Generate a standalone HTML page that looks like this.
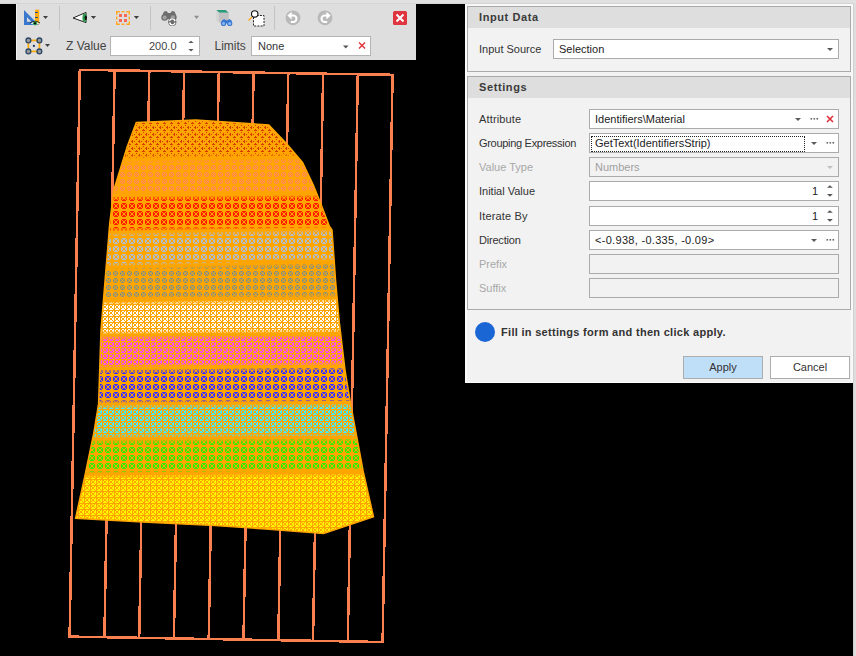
<!DOCTYPE html>
<html><head><meta charset="utf-8">
<style>
*{box-sizing:border-box;margin:0;padding:0}
html,body{width:856px;height:656px;overflow:hidden;background:#000}
body{position:relative;font-family:"Liberation Sans",sans-serif;font-size:11px;color:#333}
.a{position:absolute}
.lbl{left:479px;height:20px;line-height:20px;font-size:11px;color:#333;white-space:nowrap}
.lbl.dis{color:#a8a8a8}
.ed{height:20px;border:1px solid #ababab;font-size:11px;line-height:18px;padding-left:5px;white-space:nowrap;overflow:hidden}
.hdr{left:468px;width:382px;height:21px;background:#dedede;font-weight:bold;font-size:11px;letter-spacing:0.6px;color:#3a3a3a;padding-left:11px;line-height:21px}
.tbt{font-size:12px;color:#444;line-height:20px;height:20px;white-space:nowrap}
.btn{height:23px;border:1px solid #adadad;font-size:11px;color:#333;text-align:center;line-height:21px}
</style></head>
<body>
<svg class="a" style="left:0;top:0" width="856" height="656">
<defs><linearGradient id="sep" x1="0" y1="0" x2="0" y2="1"><stop offset="0" stop-color="#ffa500" stop-opacity="0"/><stop offset="0.5" stop-color="#ffa500" stop-opacity="1"/><stop offset="1" stop-color="#ffa500" stop-opacity="0"/></linearGradient><clipPath id="mc"><polygon points="136.3,122.5 195.7,120 268.8,124.9 286.6,143.7 302.5,162.5 313.4,185.2 321.3,205 329.2,225.8 332,230 335.6,281 339.3,322.4 345,370 350.1,401 356.6,436 363.1,471 373.5,516.8 323.6,533.5 265.6,529 215,525.5 142.5,521.9 75.6,518.3 85.2,474.4 93.6,434 98.6,403.9 101,330 105.3,277.8 109.7,224 113.7,190.5 127.1,146.9"/></clipPath><pattern id="p0" width="7" height="7" patternUnits="userSpaceOnUse" x="0" y="110"><rect width="7" height="7" fill="rgb(215,60,0)"/><g shape-rendering="crispEdges"><path d="M0 0L7 7M7 0L0 7" stroke="#ffa500" stroke-width="1.5"/><path d="M0 0H7M0 0V7M0 7H7M7 0V7" stroke="#ffa500" stroke-width="1"/></g></pattern><pattern id="p1" width="7" height="7" patternUnits="userSpaceOnUse" x="0" y="157"><rect width="7" height="7" fill="rgb(255,137,80)"/><g shape-rendering="crispEdges"><path d="M0 0L7 7M7 0L0 7" stroke="#ffa500" stroke-width="1"/><path d="M0 0H7M0 0V7M0 7H7M7 0V7" stroke="#ffa500" stroke-width="1.5"/></g></pattern><pattern id="p2" width="8" height="8" patternUnits="userSpaceOnUse" x="0" y="194"><rect width="8" height="8" fill="rgb(255,31,0)"/><g shape-rendering="crispEdges"><path d="M0 0L8 8M8 0L0 8" stroke="#ffa500" stroke-width="1"/><path d="M0 0H8M0 0V8M0 8H8M8 0V8" stroke="#ffa500" stroke-width="2"/></g></pattern><pattern id="p3" width="8" height="8" patternUnits="userSpaceOnUse" x="0" y="229"><rect width="8" height="8" fill="rgb(178,189,206)"/><g shape-rendering="crispEdges"><path d="M0 0L8 8M8 0L0 8" stroke="#ffa500" stroke-width="1"/><path d="M0 0H8M0 0V8M0 8H8M8 0V8" stroke="#ffa500" stroke-width="2"/></g></pattern><pattern id="p4" width="7" height="7" patternUnits="userSpaceOnUse" x="0" y="263"><rect width="7" height="7" fill="rgb(139,147,125)"/><g shape-rendering="crispEdges"><path d="M0 0L7 7M7 0L0 7" stroke="#ffa500" stroke-width="1"/><path d="M0 0H7M0 0V7M0 7H7M7 0V7" stroke="#ffa500" stroke-width="1.5"/></g></pattern><pattern id="p5" width="6" height="6" patternUnits="userSpaceOnUse" x="0" y="298"><rect width="6" height="6" fill="rgb(255,255,254)"/><g shape-rendering="crispEdges"><path d="M0 0L6 6M6 0L0 6" stroke="#ffa500" stroke-width="1"/><path d="M0 0H6M0 0V6M0 6H6M6 0V6" stroke="#ffa500" stroke-width="1"/></g></pattern><pattern id="p6" width="6" height="6" patternUnits="userSpaceOnUse" x="0" y="335"><rect width="6" height="6" fill="rgb(255,71,255)"/><g shape-rendering="crispEdges"><path d="M0 0L6 6M6 0L0 6" stroke="#ffa500" stroke-width="1"/><path d="M0 0H6M0 0V6M0 6H6M6 0V6" stroke="#ffa500" stroke-width="1"/></g></pattern><pattern id="p7" width="8" height="8" patternUnits="userSpaceOnUse" x="0" y="367"><rect width="8" height="8" fill="rgb(63,47,255)"/><g shape-rendering="crispEdges"><path d="M0 0L8 8M8 0L0 8" stroke="#ffa500" stroke-width="1"/><path d="M0 0H8M0 0V8M0 8H8M8 0V8" stroke="#ffa500" stroke-width="2"/></g></pattern><pattern id="p8" width="6" height="6" patternUnits="userSpaceOnUse" x="0" y="403"><rect width="6" height="6" fill="rgb(69,235,255)"/><g shape-rendering="crispEdges"><path d="M0 0L6 6M6 0L0 6" stroke="#ffa500" stroke-width="1"/><path d="M0 0H6M0 0V6M0 6H6M6 0V6" stroke="#ffa500" stroke-width="1"/></g></pattern><pattern id="p9" width="8" height="8" patternUnits="userSpaceOnUse" x="0" y="438"><rect width="8" height="8" fill="rgb(52,237,0)"/><g shape-rendering="crispEdges"><path d="M0 0L8 8M8 0L0 8" stroke="#ffa500" stroke-width="1"/><path d="M0 0H8M0 0V8M0 8H8M8 0V8" stroke="#ffa500" stroke-width="2"/></g></pattern><pattern id="p10" width="6" height="6" patternUnits="userSpaceOnUse" x="0" y="473"><rect width="6" height="6" fill="rgb(255,246,0)"/><g shape-rendering="crispEdges"><path d="M0 0L6 6M6 0L0 6" stroke="#ffa500" stroke-width="1"/><path d="M0 0H6M0 0V6M0 6H6M6 0V6" stroke="#ffa500" stroke-width="1"/></g></pattern></defs>
<g shape-rendering="crispEdges"><polygon points="79.8,69.8 392.6,74.8 382.6,642.0 69.6,636.6" fill="none" stroke="rgb(250,128,80)" stroke-width="2.5"/><line x1="114.6" y1="70.4" x2="104.4" y2="637.2" stroke="rgb(250,128,80)" stroke-width="2.5"/><line x1="149.3" y1="70.9" x2="139.2" y2="637.8" stroke="rgb(250,128,80)" stroke-width="2.5"/><line x1="184.1" y1="71.5" x2="173.9" y2="638.4" stroke="rgb(250,128,80)" stroke-width="2.5"/><line x1="218.8" y1="72.0" x2="208.7" y2="639.0" stroke="rgb(250,128,80)" stroke-width="2.5"/><line x1="253.6" y1="72.6" x2="243.5" y2="639.6" stroke="rgb(250,128,80)" stroke-width="2.5"/><line x1="288.3" y1="73.1" x2="278.3" y2="640.2" stroke="rgb(250,128,80)" stroke-width="2.5"/><line x1="323.1" y1="73.7" x2="313.0" y2="640.8" stroke="rgb(250,128,80)" stroke-width="2.5"/><line x1="357.8" y1="74.2" x2="347.8" y2="641.4" stroke="rgb(250,128,80)" stroke-width="2.5"/></g>
<g clip-path="url(#mc)"><rect x="60" y="110" width="330" height="430" fill="#ffa500"/><polygon points="60,110.0 390,110.0 390,155.6 60,160.6" fill="url(#p0)"/><polygon points="60,160.6 390,155.6 390,193.6 60,195.9" fill="url(#p1)"/><polygon points="60,195.9 390,193.6 390,227.8 60,233.1" fill="url(#p2)"/><polygon points="60,233.1 390,227.8 390,259.9 60,268.8" fill="url(#p3)"/><polygon points="60,268.8 390,259.9 390,297.2 60,301.5" fill="url(#p4)"/><polygon points="60,301.5 390,297.2 390,333.0 60,335.3" fill="url(#p5)"/><polygon points="60,335.3 390,333.0 390,365.3 60,369.2" fill="url(#p6)"/><polygon points="60,369.2 390,365.3 390,402.0 60,404.3" fill="url(#p7)"/><polygon points="60,404.3 390,402.0 390,436.9 60,439.3" fill="url(#p8)"/><polygon points="60,439.3 390,436.9 390,471.9 60,474.3" fill="url(#p9)"/><polygon points="60,474.3 390,471.9 390,545.0 60,545.0" fill="url(#p10)"/><line x1="60" y1="160.6" x2="390" y2="155.6" stroke="#ffa500" stroke-width="8" stroke-opacity="0.45"/><line x1="60" y1="160.6" x2="390" y2="155.6" stroke="#ffa500" stroke-width="3"/><line x1="60" y1="195.9" x2="390" y2="193.6" stroke="#ffa500" stroke-width="8" stroke-opacity="0.45"/><line x1="60" y1="195.9" x2="390" y2="193.6" stroke="#ffa500" stroke-width="3"/><line x1="60" y1="233.1" x2="390" y2="227.8" stroke="#ffa500" stroke-width="8" stroke-opacity="0.45"/><line x1="60" y1="233.1" x2="390" y2="227.8" stroke="#ffa500" stroke-width="3"/><line x1="60" y1="268.8" x2="390" y2="259.9" stroke="#ffa500" stroke-width="8" stroke-opacity="0.45"/><line x1="60" y1="268.8" x2="390" y2="259.9" stroke="#ffa500" stroke-width="3"/><line x1="60" y1="301.5" x2="390" y2="297.2" stroke="#ffa500" stroke-width="8" stroke-opacity="0.45"/><line x1="60" y1="301.5" x2="390" y2="297.2" stroke="#ffa500" stroke-width="3"/><line x1="60" y1="335.3" x2="390" y2="333.0" stroke="#ffa500" stroke-width="8" stroke-opacity="0.45"/><line x1="60" y1="335.3" x2="390" y2="333.0" stroke="#ffa500" stroke-width="3"/><line x1="60" y1="369.2" x2="390" y2="365.3" stroke="#ffa500" stroke-width="8" stroke-opacity="0.45"/><line x1="60" y1="369.2" x2="390" y2="365.3" stroke="#ffa500" stroke-width="3"/><line x1="60" y1="404.3" x2="390" y2="402.0" stroke="#ffa500" stroke-width="8" stroke-opacity="0.45"/><line x1="60" y1="404.3" x2="390" y2="402.0" stroke="#ffa500" stroke-width="3"/><line x1="60" y1="439.3" x2="390" y2="436.9" stroke="#ffa500" stroke-width="8" stroke-opacity="0.45"/><line x1="60" y1="439.3" x2="390" y2="436.9" stroke="#ffa500" stroke-width="3"/><line x1="60" y1="474.3" x2="390" y2="471.9" stroke="#ffa500" stroke-width="8" stroke-opacity="0.45"/><line x1="60" y1="474.3" x2="390" y2="471.9" stroke="#ffa500" stroke-width="3"/></g>
<polygon points="136.3,122.5 195.7,120 268.8,124.9 286.6,143.7 302.5,162.5 313.4,185.2 321.3,205 329.2,225.8 332,230 335.6,281 339.3,322.4 345,370 350.1,401 356.6,436 363.1,471 373.5,516.8 323.6,533.5 265.6,529 215,525.5 142.5,521.9 75.6,518.3 85.2,474.4 93.6,434 98.6,403.9 101,330 105.3,277.8 109.7,224 113.7,190.5 127.1,146.9" fill="none" stroke="#ffa500" stroke-width="1.5"/>
</svg>
<div class="a" style="left:0;top:0;width:856px;height:4px;background:#e1e1e1;border-bottom:1px solid #d4d4d4"></div>
<!-- toolbar -->
<div class="a" id="tb" style="left:16px;top:4px;width:400px;height:56px;background:#dedede;border-left:1px solid #f2f2f2"></div>
<div class="a" style="left:59px;top:6px;width:1px;height:24px;background:#c4c4c4"></div>
<div class="a" style="left:150px;top:6px;width:1px;height:24px;background:#c4c4c4"></div>
<div class="a" style="left:274px;top:6px;width:1px;height:24px;background:#c4c4c4"></div>
<div class="a" style="left:110px;top:36px;width:90px;height:20px;background:#fff;border:1px solid #b4b4b4"></div>
<div class="a" style="left:251px;top:36px;width:120px;height:20px;background:#fff;border:1px solid #b4b4b4"></div>
<svg class="a" style="left:0;top:0" width="416" height="60">
 <!-- icon1 set square -->
 <path d="M24 10L24 25L39 25Z M27 17.3L27 21.8L31.5 21.8Z" fill="#3a78d0" fill-rule="evenodd"/>
 <rect x="35" y="9.7" width="4.2" height="14.6" fill="#ffaa10"/>
 <rect x="35" y="12" width="2.8" height="1" fill="#1a4a80"/>
 <rect x="35" y="17" width="2.8" height="1" fill="#1a4a80"/>
 <path d="M30.5 23.2Q35 25.8 39.5 23.2Q35 20.6 30.5 23.2Z" fill="#fff"/>
 <path d="M29.8 23Q35 19.5 40 23" stroke="#1a1a1a" stroke-width="0.9" fill="none"/>
 <circle cx="35" cy="23.3" r="2.1" fill="#2e9a50"/>
 <circle cx="35" cy="23.3" r="1" fill="#000"/>
 <path d="M43 16H48L45.5 19Z" fill="#404040"/>
 <!-- icon2 eye -->
 <path d="M73 18L86 12.4L86 22.6Z" fill="#fff" stroke="#222" stroke-width="1"/>
 <path d="M82.8 14.6Q84.5 13.6 86.3 13.6L86.3 22Q84.5 22 82.8 21Q82 18 82.8 14.6Z" fill="#2e9a50"/>
 <ellipse cx="85.8" cy="17.8" rx="1.2" ry="2.4" fill="#111"/>
 <path d="M90.8 16H96.1L93.45 19Z" fill="#404040"/>
 <!-- icon3 grid -->
 <path d="M116.7 14.8V11.7H119.8M121.5 11.7H124.5M126.2 11.7H129.3V14.8M129.3 16.5V19.5M129.3 21.2V24.3H126.2M124.5 24.3H121.5M119.8 24.3H116.7V21.2M116.7 19.5V16.5" fill="none" stroke="#ffa820" stroke-width="1.4"/>
 <rect x="119" y="14" width="3" height="3" fill="#f86850"/>
 <rect x="124" y="14" width="3" height="3" fill="#f86850"/>
 <rect x="119" y="19" width="3" height="3" fill="#f86850"/>
 <rect x="124" y="19" width="3" height="3" fill="#f86850"/>
 <path d="M133.8 16H139.1L136.45 19Z" fill="#404040"/>
 <!-- icon4 binoculars gray -->
 <path d="M162 16L164 11.5L166.5 11L168 13L170.5 13L172 11L174.5 11.5L176.5 16L176.5 19L162 19Z" fill="#6e6e6e"/>
 <circle cx="164.6" cy="17.5" r="3.3" fill="#6e6e6e"/>
 <circle cx="164.6" cy="17.5" r="2.1" fill="#a2a2a2"/>
 <circle cx="172.9" cy="17.3" r="3.3" fill="#6e6e6e"/>
 <circle cx="172.9" cy="17.3" r="2.1" fill="#a2a2a2"/>
 <circle cx="172.3" cy="21.9" r="4.1" fill="#6a6a6a"/>
 <path d="M169.6 21.2A2.8 2.8 0 0 1 174.8 20.4M175 22.6A2.8 2.8 0 0 1 169.8 23.4" stroke="#fff" stroke-width="1.3" fill="none"/>
 <path d="M174 19.2L176 20.8L173.8 21.5Z M170.6 24.6L168.6 23L170.8 22.3Z" fill="#fff"/>
 <path d="M193.9 15.8H199.2L196.55 19Z" fill="#909090"/>
 <!-- icon5 cube -->
 <path d="M216.2 10L225.7 10L228.8 12.8L219 12.8Z" fill="#2a9a7a"/>
 <path d="M216.2 10L219 12.8L219 22.5L216.2 20.6Z" fill="#d4d4d4"/>
 <path d="M219 12.8L228.8 12.8L228.8 22.5L219 22.5Z" fill="#c2c2c2"/>
 <path d="M222 20.5L224 19L226 20.3L227.5 20.3L229.5 19L231.5 20.5L232 23.5L221 23.5Z" fill="#3a78d0"/>
 <circle cx="223.5" cy="23.4" r="2.6" fill="#3a78d0"/>
 <circle cx="229.7" cy="23.4" r="2.6" fill="#3a78d0"/>
 <circle cx="223.5" cy="23.6" r="1.5" fill="#8ab8f8"/>
 <circle cx="229.7" cy="23.6" r="1.5" fill="#8ab8f8"/>
 <!-- icon6 zoom select -->
 <rect x="253.5" y="15.5" width="10.5" height="10.5" fill="#fff" stroke="#222" stroke-width="1" stroke-dasharray="2 1.2"/>
 <path d="M248.5 20.5L252 17" stroke="#ffaa20" stroke-width="1.4"/>
 <circle cx="254.7" cy="13.9" r="3.2" fill="#fff" stroke="#111" stroke-width="1.1"/>
 <!-- undo / redo -->
 <circle cx="293" cy="17.8" r="7.4" fill="#b9b9b9"/>
 <path d="M291 15.6H293.3A3.2 3.2 0 0 1 293.3 22H290.8" stroke="#fff" stroke-width="2" fill="none"/>
 <path d="M287.3 15.6L291.6 11.8L291.6 19.4Z" fill="#fff"/>
 <circle cx="325" cy="17.8" r="7.4" fill="#b9b9b9"/>
 <path d="M327 15.6H324.7A3.2 3.2 0 0 0 324.7 22H327.2" stroke="#fff" stroke-width="2" fill="none"/>
 <path d="M330.7 15.6L326.4 11.8L326.4 19.4Z" fill="#fff"/>
 <!-- close -->
 <rect x="393" y="11" width="14" height="14" rx="1.5" fill="#e0343f"/>
 <path d="M396.5 14.5L403.5 21.5M403.5 14.5L396.5 21.5" stroke="#fff" stroke-width="2"/>
 <!-- row2 node icon -->
 <rect x="28.4" y="40.4" width="11" height="11" fill="none" stroke="#ffaa00" stroke-width="1.7"/>
 <g fill="#9a9a9a" stroke="#2a4668" stroke-width="1.3">
  <circle cx="28.4" cy="40.4" r="2.4"/><circle cx="39.4" cy="40.4" r="2.4"/><circle cx="28.4" cy="51.4" r="2.4"/><circle cx="39.4" cy="51.4" r="2.4"/>
 </g>
 <circle cx="33.9" cy="45.9" r="1.1" fill="#1e3a5a"/>
 <path d="M45 44H50L47.5 47Z" fill="#404040"/>
 <!-- spinner -->
 <path d="M188.4 43.1L191 40.8L193.6 43.1Z" fill="#555"/>
 <path d="M188.4 49L191 51.6L193.6 49Z" fill="#555"/>
 <!-- limits combo arrow + x -->
 <path d="M343 45.5H348.5L345.75 48.5Z" fill="#555"/>
 <path d="M359 42.5L365 48.5M365 42.5L359 48.5" stroke="#e0303a" stroke-width="1.4"/>
</svg>
<div class="a tbt" style="left:66px;top:36px">Z Value</div>
<div class="a tbt" style="left:149px;top:36px;font-size:11px">200.0</div>
<div class="a tbt" style="left:214.5px;top:36px">Limits</div>
<div class="a tbt" style="left:258px;top:36px;color:#333;font-size:11px">None</div>
<!-- dialog -->
<div class="a" style="left:465px;top:4px;width:388px;height:379px;background:#f2f2f2;border-left:2px solid #fbfbfb;border-top:2px solid #f8f8f8;border-right:2px solid #f8f8f8;border-bottom:1px solid #fbfbfb"></div>
<div class="a" style="left:467px;top:6px;width:384px;height:66px;border:1px solid #aaaaaa"></div>
<div class="a hdr" style="top:7px">Input Data</div>
<div class="a lbl" style="top:39px">Input Source</div>
<div class="a ed" style="left:553px;top:39px;width:286px;background:#fff;color:#222">Selection</div>
<svg class="a" style="left:826px;top:47px" width="8" height="5"><path d="M1 1H7L4 4Z" fill="#5a5a5a"/></svg>
<div class="a" style="left:467px;top:76px;width:384px;height:234px;border:1px solid #aaaaaa"></div>
<div class="a hdr" style="top:77px">Settings</div>
<div class="a lbl" style="top:109px;letter-spacing:0.15px">Attribute</div><div class="a lbl" style="top:133px;letter-spacing:-0.3px">Grouping Expression</div><div class="a lbl dis" style="top:157px;letter-spacing:0px">Value Type</div><div class="a lbl" style="top:181px;letter-spacing:0px">Initial Value</div><div class="a lbl" style="top:206px;letter-spacing:0.15px">Iterate By</div><div class="a lbl" style="top:230px;letter-spacing:-0.2px">Direction</div><div class="a lbl dis" style="top:254px;letter-spacing:0px">Prefix</div><div class="a lbl dis" style="top:278px;letter-spacing:0px">Suffix</div><div class="a ed" style="left:589px;top:109px;width:250px;background:#fff;color:#222">Identifiers\Material</div><svg class="a" style="left:794px;top:117px" width="8" height="5"><path d="M1 1H7L4 4Z" fill="#5a5a5a"/></svg><svg class="a" style="left:810px;top:117px" width="10" height="4"><g fill="#666"><rect x="0.5" y="1" width="1.6" height="1.6"/><rect x="3.5" y="1" width="1.6" height="1.6"/><rect x="6.5" y="1" width="1.6" height="1.6"/></g></svg><svg class="a" style="left:826px;top:115px" width="8" height="8"><path d="M1 1L7 7M7 1L1 7" stroke="#e0303a" stroke-width="1.6"/></svg><div class="a ed" style="left:589px;top:133px;width:250px;background:#fff;color:#222"><span style="position:absolute;left:1px;top:2px;width:214px;height:16px;border:1px dotted #222"></span>GetText(IdentifiersStrip)</div><svg class="a" style="left:810px;top:141px" width="8" height="5"><path d="M1 1H7L4 4Z" fill="#5a5a5a"/></svg><svg class="a" style="left:826px;top:141px" width="10" height="4"><g fill="#666"><rect x="0.5" y="1" width="1.6" height="1.6"/><rect x="3.5" y="1" width="1.6" height="1.6"/><rect x="6.5" y="1" width="1.6" height="1.6"/></g></svg><div class="a ed" style="left:589px;top:157px;width:250px;background:#f2f2f2;color:#a0a0a0">Numbers</div><svg class="a" style="left:826px;top:165px" width="8" height="5"><path d="M1 1H7L4 4Z" fill="#c0c0c0"/></svg><div class="a ed" style="left:589px;top:181px;width:250px;background:#fff;color:#222"><span style="position:absolute;right:20px">1</span></div><svg class="a" style="left:826px;top:184px" width="8" height="14"><path d="M1 3.8L3.9 1.2L6.8 3.8Z M1 10L3.9 12.7L6.8 10Z" fill="#555"/></svg><div class="a ed" style="left:589px;top:206px;width:250px;background:#fff;color:#222"><span style="position:absolute;right:20px">1</span></div><svg class="a" style="left:826px;top:209px" width="8" height="14"><path d="M1 3.8L3.9 1.2L6.8 3.8Z M1 10L3.9 12.7L6.8 10Z" fill="#555"/></svg><div class="a ed" style="left:589px;top:230px;width:250px;background:#fff;color:#222"><span style="letter-spacing:0.3px">&lt;-0.938, -0.335, -0.09&gt;</span></div><svg class="a" style="left:810px;top:238px" width="8" height="5"><path d="M1 1H7L4 4Z" fill="#5a5a5a"/></svg><svg class="a" style="left:826px;top:238px" width="10" height="4"><g fill="#666"><rect x="0.5" y="1" width="1.6" height="1.6"/><rect x="3.5" y="1" width="1.6" height="1.6"/><rect x="6.5" y="1" width="1.6" height="1.6"/></g></svg><div class="a ed" style="left:589px;top:254px;width:250px;background:#f2f2f2;color:#a0a0a0"></div><div class="a ed" style="left:589px;top:278px;width:250px;background:#f2f2f2;color:#a0a0a0"></div>
<div class="a" style="left:475px;top:322px;width:20px;height:20px;border-radius:50%;background:#1a66d4"></div>
<div class="a" style="left:501px;top:322px;font-size:11px;letter-spacing:0.3px;font-weight:bold;color:#333;line-height:20px;white-space:nowrap">Fill in settings form and then click apply.</div>
<div class="a btn" style="left:683px;top:356px;width:80px;background:#bfdef8">Apply</div>
<div class="a btn" style="left:770px;top:356px;width:80px;background:#fff">Cancel</div>
<div class="a" style="left:853px;top:3px;width:3px;height:653px;background:#dedede;border-left:1px solid #d0d0d0"></div>
</body></html>
